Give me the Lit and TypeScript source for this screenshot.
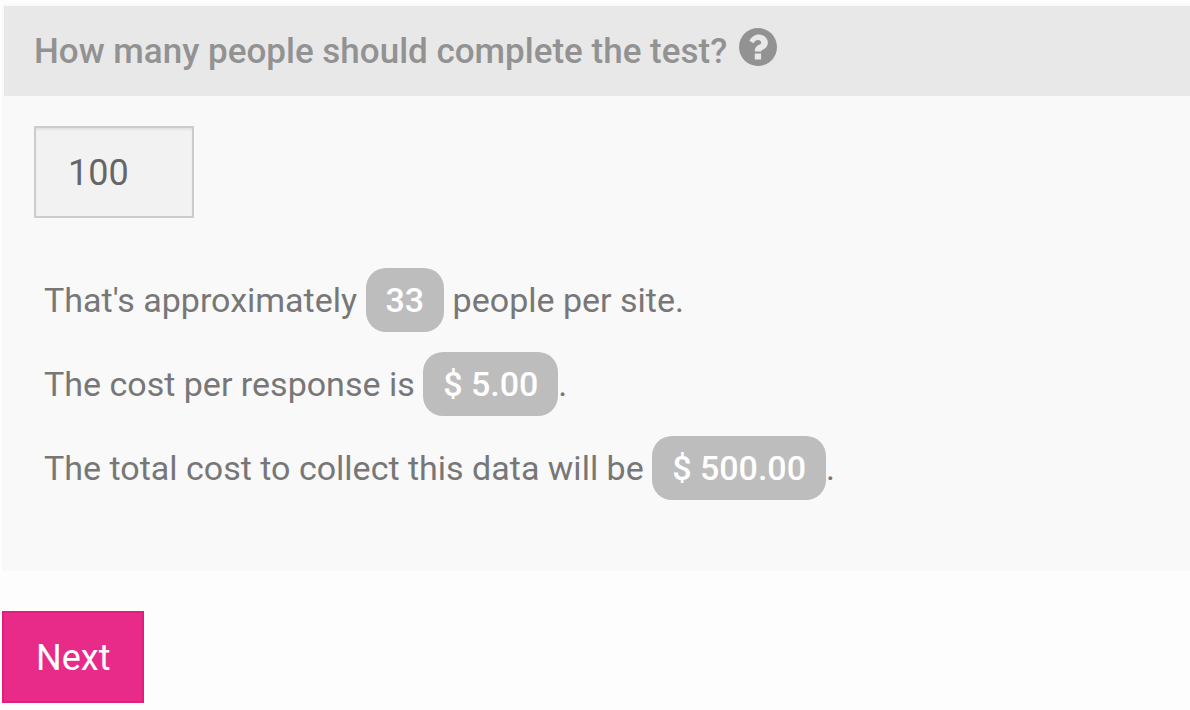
import { LitElement, html, css } from "lit";
import { customElement, state } from "lit/decorators.js";

@customElement("app-root")
export class AppRoot extends LitElement {
  static styles = css`
    :host {
      display: block;
      box-sizing: border-box;
      min-height: 100vh;
      padding: 4px 0 7px 2px;
      background: #fdfdfd;
      color: #777;
      font-family: Roboto, sans-serif;
      font-size: 34px;
    }
    .panel {
      border: 2px solid #f9f9f9;
      border-right: 0;
      background: #f9f9f9;
    }
    .header {
      display: flex;
      align-items: flex-start;
      gap: 12px;
      padding: 22px 30px 20px;
      background: #e8e8e8;
      color: #929292;
    }
    .title {
      font-size: 35px;
      line-height: 48px;
      font-weight: 500;
    }
    .help {
      display: block;
      flex: none;
      width: 38px;
      height: 38px;
      margin: 0;
      padding: 0;
      border: 0;
      background: none;
      color: inherit;
      cursor: pointer;
    }
    .help svg {
      display: block;
      width: 100%;
      height: 100%;
    }
    .body {
      padding: 30px 30px 69px;
    }
    .count {
      display: block;
      box-sizing: border-box;
      width: 160px;
      height: 92px;
      margin: 0 0 50px;
      padding: 2px 32px 0;
      border: 2px solid #ccc;
      border-radius: 0;
      background: #f2f2f2;
      box-shadow: inset 0 2px 2px rgba(0, 0, 0, 0.06);
      color: #666;
      font: 400 36px Roboto, sans-serif;
      outline: none;
    }
    .summary {
      display: grid;
      gap: 20px;
      padding: 0 10px;
    }
    .line {
      margin: 0;
      line-height: 64px;
    }
    .pill {
      display: inline-block;
      padding: 0 20px;
      border-radius: 20px;
      background: #bdbdbd;
      color: #fff;
      font-weight: 500;
    }
    .next {
      display: block;
      height: 92px;
      margin: 40px 0 0;
      padding: 2px 32px 0;
      border: 2px solid #e31c80;
      border-radius: 0;
      background: #e82a89;
      color: #fff;
      font: 400 36px Roboto, sans-serif;
      cursor: pointer;
    }
  `;

  @state() private people = 100;
  private sites = 3;
  private rate = 5;

  private onInput(e: Event) {
    this.people = Number((e.target as HTMLInputElement).value) || 0;
  }

  render() {
    return html`
      <section class="panel">
        <div class="header">
          <label class="title" for="people">How many people should complete the test?</label>
          <button class="help" type="button" aria-label="Help">
            <svg viewBox="0 0 38 38" aria-hidden="true">
              <circle cx="19" cy="19" r="19" fill="currentColor" />
              <path
                fill="#e8e8e8"
                d="M15.8 25.4h6.3v6.2h-6.3zM10.3 12.7C12.5 8.9 15.4 6.4 19.7 6.4c4.7 0 9.2 3.5 9.2 8.3 0 3.5-2.1 5.2-4.3 6.5-1.6 1-2.5 1.3-2.5 2.3h-6.3v-1.1c0-3 2.1-4.4 3.9-5.4 1.5-.8 2.5-1.3 2.5-2.5 0-1.6-1.6-2.5-3.2-2.5-2 0-3 1.2-4.5 3.2z"
              />
            </svg>
          </button>
        </div>
        <div class="body">
          <input class="count" id="people" type="text" inputmode="numeric" .value=${String(this.people)} @input=${this.onInput} />
          <div class="summary">
            <p class="line">That's approximately <span class="pill">${Math.floor(this.people / this.sites)}</span> people per site.</p>
            <p class="line">The cost per response is <span class="pill">$ ${this.rate.toFixed(2)}</span>.</p>
            <p class="line">The total cost to collect this data will be <span class="pill">$ ${(this.people * this.rate).toFixed(2)}</span>.</p>
          </div>
        </div>
      </section>
      <button class="next" type="button">Next</button>
    `;
  }
}
